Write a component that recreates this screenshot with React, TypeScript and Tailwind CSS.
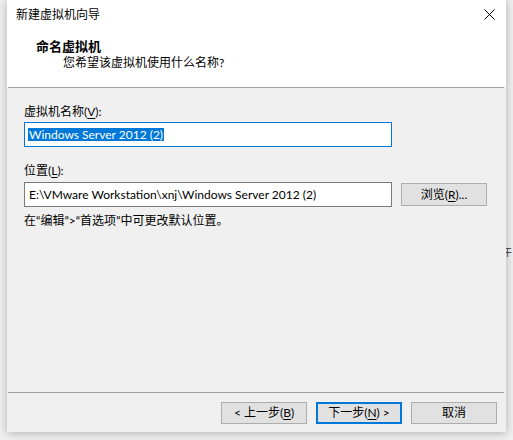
import React from "react";

const font = { fontFamily: 'Lato, "Noto Sans CJK SC", sans-serif' };

function U({ children }: { children: React.ReactNode }) {
  return <span className="underline underline-offset-[2px]">{children}</span>;
}

export default function App() {
  return (
    <div
      className="relative w-[513px] h-[440px] overflow-hidden bg-[#f0f0f0] text-[12px] text-black"
      style={font}
    >
      <div className="absolute left-[503px] top-[247px] z-0 text-[9px] leading-[11px] text-[#333]">干</div>
      <div className="relative z-10 ml-[7px] w-[499px] h-[432px] flex flex-col bg-[#f0f0f0] shadow-[0_1px_9px_rgba(0,0,0,0.28)]">
        {/* header */}
        <div className="h-[87px] bg-white flex flex-col">
          <div className="h-[30px] flex items-center justify-between pl-[9px] pr-[11px]">
            <span className="leading-[16px]">新建虚拟机向导</span>
            <svg width="11" height="11" viewBox="0 0 11 11" className="mt-[-1px]">
              <path d="M0.5 0.5 L10.5 10.5 M10.5 0.5 L0.5 10.5" stroke="#000" strokeWidth="1" fill="none" />
            </svg>
          </div>
          <div className="mt-[8px] pl-[29px] text-[13px] font-bold leading-[17px]">命名虚拟机</div>
          <div className="pl-[56px] leading-[16px]">您希望该虚拟机使用什么名称?</div>
        </div>
        <div className="h-px bg-[#a0a0a0] mx-[1px] mr-[2px]" />
        {/* body */}
        <div className="flex-1 flex flex-col pl-[17px]">
          <div className="mt-[16px] leading-[16px]">
            虚拟机名称(<U>V</U>):
          </div>
          <div className="mt-[2px] w-[368px] h-[25px] border border-[#0078d7] bg-white flex items-center pl-[3px]">
            <span className="bg-[#0078d7] text-white leading-[13px] h-[13px] flex items-center px-[1px]">Windows Server 2012 (2)</span>
          </div>
          <div className="mt-[16px] leading-[16px]">
            位置(<U>L</U>):
          </div>
          <div className="mt-[3px] flex items-center">
            <div className="w-[368px] h-[25px] border border-[#7a7a7a] bg-white flex items-center pl-[4px] leading-[16px]">
              E:\VMware Workstation\xnj\Windows Server 2012 (2)
            </div>
            <button className="ml-[9px] w-[86px] h-[23px] border border-[#adadad] bg-[#e1e1e1] flex items-center justify-center leading-[16px]">
              浏览(<U>R</U>)...
            </button>
          </div>
          <div className="mt-[6px] leading-[16px]">在“编辑”&gt;“首选项”中可更改默认位置。</div>
        </div>
        {/* footer */}
        <div className="h-px bg-[#a0a0a0] mx-[1px] mr-[2px]" />
        <div className="flex justify-end gap-[9px] pr-[9px] pt-[9px] pb-[8px]">
          <button className="w-[86px] h-[22px] border border-[#adadad] bg-[#e1e1e1] flex items-center justify-center leading-[16px]">
            &lt; 上一步(<U>B</U>)
          </button>
          <button className="w-[86px] h-[22px] border-2 border-[#0078d7] bg-[#e1e1e1] flex items-center justify-center leading-[16px]">
            下一步(<U>N</U>) &gt;
          </button>
          <button className="w-[86px] h-[22px] border border-[#adadad] bg-[#e1e1e1] flex items-center justify-center leading-[16px]">
            取消
          </button>
        </div>
      </div>
    </div>
  );
}
